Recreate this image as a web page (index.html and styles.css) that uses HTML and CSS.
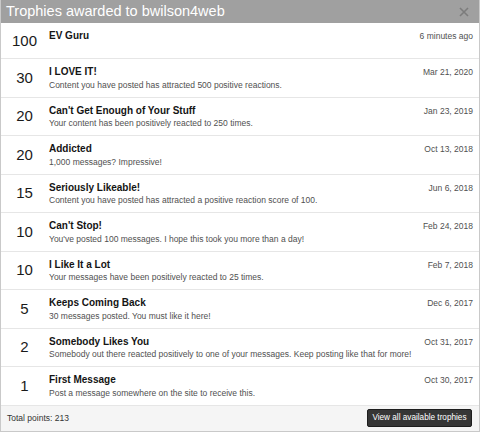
FILE: index.html
```html
<!DOCTYPE html>
<html>
<head>
<meta charset="utf-8">
<link rel="stylesheet" href="styles.css">
</head>
<body>
<div class="dialog">
  <div class="header">
    <span class="title">Trophies awarded to bwilson4web</span>
    <svg class="close" width="10" height="10" viewBox="0 0 10 10"><path d="M1 1L9 9M9 1L1 9" stroke="#7c7c7c" stroke-width="1.6" fill="none"/></svg>
  </div>
  <ul class="list">
    <li class="row"><div class="pts">100</div><div class="main"><div class="line"><span class="name">EV Guru</span><span class="date">6 minutes ago</span></div></div></li>
    <li class="row"><div class="pts">30</div><div class="main"><div class="line"><span class="name">I LOVE IT!</span><span class="date">Mar 21, 2020</span></div><div class="desc">Content you have posted has attracted 500 positive reactions.</div></div></li>
    <li class="row"><div class="pts">20</div><div class="main"><div class="line"><span class="name">Can't Get Enough of Your Stuff</span><span class="date">Jan 23, 2019</span></div><div class="desc">Your content has been positively reacted to 250 times.</div></div></li>
    <li class="row"><div class="pts">20</div><div class="main"><div class="line"><span class="name">Addicted</span><span class="date">Oct 13, 2018</span></div><div class="desc">1,000 messages? Impressive!</div></div></li>
    <li class="row"><div class="pts">15</div><div class="main"><div class="line"><span class="name">Seriously Likeable!</span><span class="date">Jun 6, 2018</span></div><div class="desc">Content you have posted has attracted a positive reaction score of 100.</div></div></li>
    <li class="row"><div class="pts">10</div><div class="main"><div class="line"><span class="name">Can't Stop!</span><span class="date">Feb 24, 2018</span></div><div class="desc">You've posted 100 messages. I hope this took you more than a day!</div></div></li>
    <li class="row"><div class="pts">10</div><div class="main"><div class="line"><span class="name">I Like It a Lot</span><span class="date">Feb 7, 2018</span></div><div class="desc">Your messages have been positively reacted to 25 times.</div></div></li>
    <li class="row"><div class="pts">5</div><div class="main"><div class="line"><span class="name">Keeps Coming Back</span><span class="date">Dec 6, 2017</span></div><div class="desc">30 messages posted. You must like it here!</div></div></li>
    <li class="row"><div class="pts">2</div><div class="main"><div class="line"><span class="name">Somebody Likes You</span><span class="date">Oct 31, 2017</span></div><div class="desc">Somebody out there reacted positively to one of your messages. Keep posting like that for more!</div></div></li>
    <li class="row"><div class="pts">1</div><div class="main"><div class="line"><span class="name">First Message</span><span class="date">Oct 30, 2017</span></div><div class="desc">Post a message somewhere on the site to receive this.</div></div></li>
  </ul>
  <div class="footer">
    <span class="total">Total points: 213</span>
    <span class="btn">View all available trophies</span>
  </div>
</div>
</body>
</html>
```

FILE: styles.css
```css
html, body {
  margin: 0;
  padding: 0;
  background: #ffffff;
}
body {
  font-family: "Liberation Sans", Arial, sans-serif;
  color: #141414;
}
.dialog {
  width: 480px;
  height: 432px;
  box-sizing: border-box;
  border-left: 1px solid #c9c9c9;
  border-right: 1px solid #c9c9c9;
  border-bottom: 1px solid #c9c9c9;
  display: flex;
  flex-direction: column;
  overflow: hidden;
}
.header {
  height: 23px;
  background: #a0a0a0;
  display: flex;
  align-items: center;
  justify-content: space-between;
  padding: 0 11px 0 6px;
  margin: 0 -1px;
  flex-shrink: 0;
}
.title {
  color: #ffffff;
  font-size: 14.5px;
  line-height: 23px;
}
.close {
  display: block;
}
.list {
  list-style: none;
  margin: 0;
  padding: 0;
}
.row {
  display: flex;
  border-bottom: 1px solid #e6e6e6;
}
.pts {
  width: 47px;
  flex-shrink: 0;
  display: flex;
  align-items: center;
  justify-content: center;
  font-size: 15px;
  line-height: 22px;
  padding: 6.5px 0;
  color: #1a1a1a;
}
.main {
  flex: 1;
  padding: 6px 6px 6px 1px;
}
.line {
  display: flex;
  justify-content: space-between;
  align-items: baseline;
}
.name {
  font-weight: bold;
  font-size: 10px;
  line-height: 13.5px;
}
.date {
  font-size: 8.5px;
  color: #505050;
}
.desc {
  font-size: 8.5px;
  line-height: 12px;
  color: #505050;
}
.footer {
  flex: 1;
  background: #f5f5f5;
  display: flex;
  align-items: center;
  justify-content: space-between;
  padding: 0 7px 0 6px;
}
.total {
  font-size: 8.5px;
  color: #333;
}
.btn {
  background: #363636;
  color: #fff;
  font-size: 8.2px;
  line-height: 10px;
  border: 1px solid #1e1e1e;
  border-radius: 2px;
  padding: 3px 4.5px;
}
```
